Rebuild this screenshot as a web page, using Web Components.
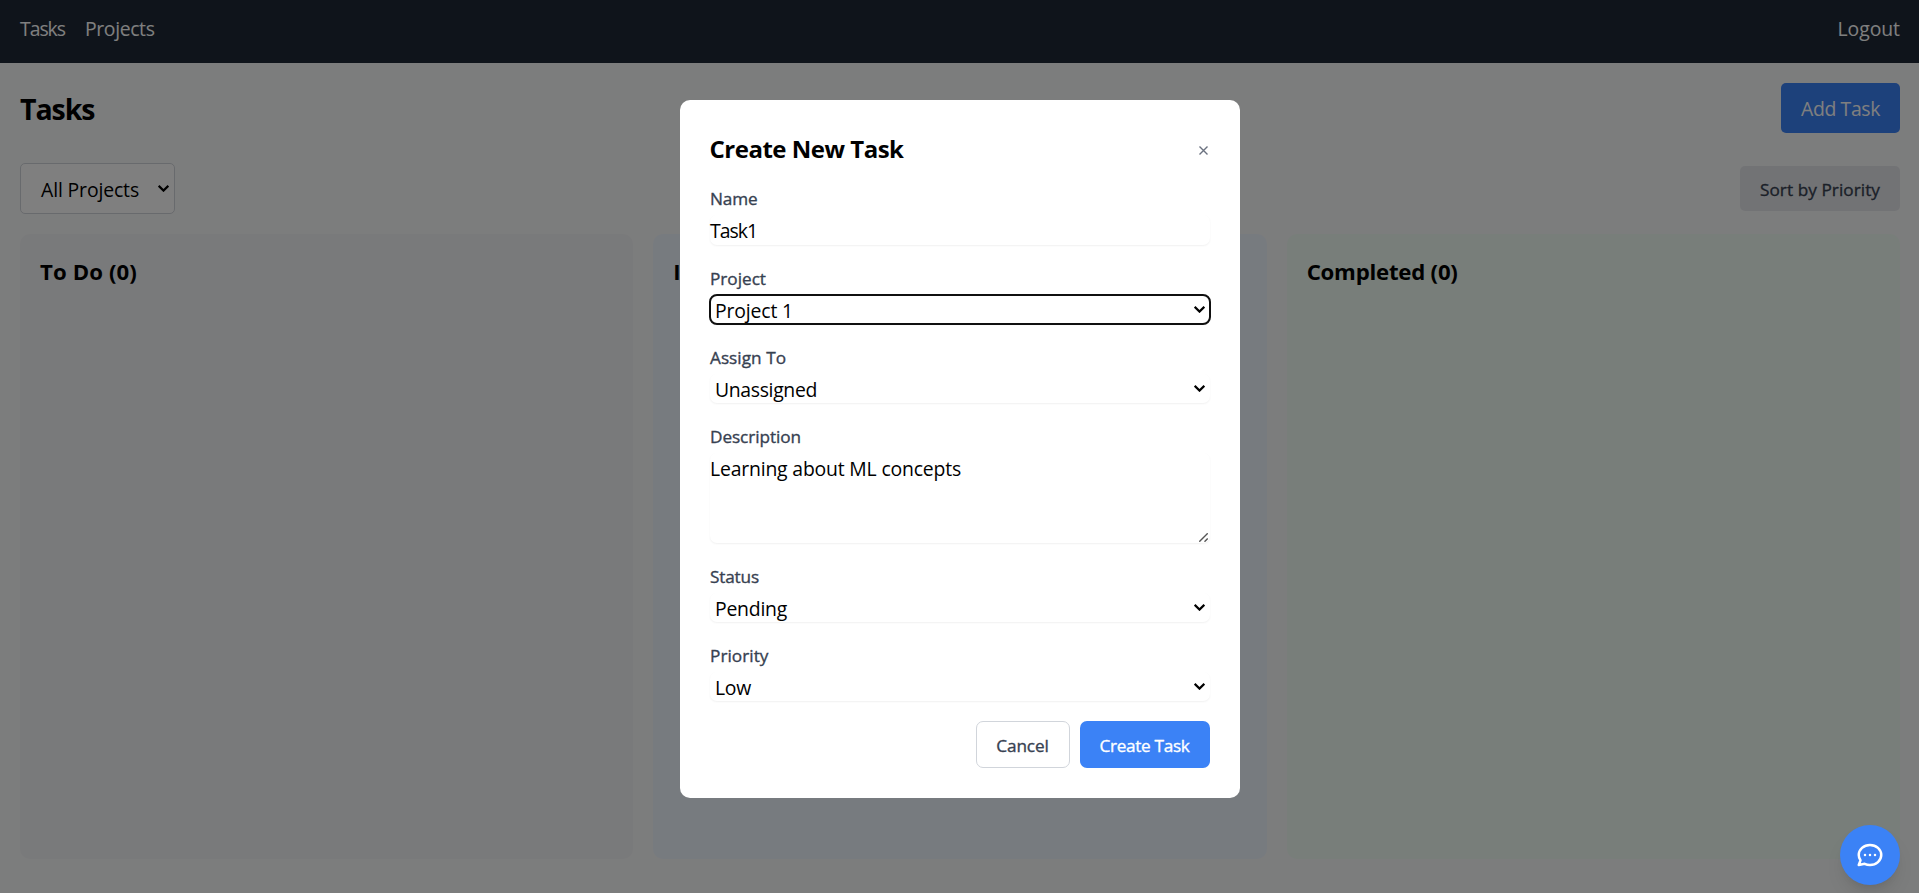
<!DOCTYPE html>
<html lang="en"><head><meta charset="utf-8"><title>Tasks</title>
<style>
html,body{margin:0;height:100%;overflow:hidden}
body{font:19.4px/30px "Open Sans","Noto Sans",sans-serif;color:#000}
</style></head><body>
<task-app></task-app>
<script>
const define=(name,html,init)=>customElements.define(name,class extends HTMLElement{
  connectedCallback(){
    if(this.shadowRoot)return;
    const t=document.createElement('template');
    t.innerHTML=typeof html==='function'?html(this):html;
    this.attachShadow({mode:'open'}).append(t.content.cloneNode(true));
    if(init)init(this);
  }
});

/* A one-line label whose letter spacing is tuned to a given width. */
define('fit-text','<style>:host{display:inline-block;white-space:nowrap}span{display:inline-block}</style><span><slot></slot></span>',el=>{
  const w=+el.getAttribute('w'),s=el.shadowRoot.querySelector('span');
  const n=el.textContent.length,now=s.getBoundingClientRect().width;
  if(now&&w)s.style.letterSpacing=((w-now)/n)+'px';
  el.style.width=w+'px';
});

define('chevron-icon','<style>:host{display:block;width:11px;height:7px}svg{display:block}</style><svg width="11" height="7" viewBox="0 0 11 7"><path d="M.7.9 5.5 5.6 10.3.9" fill="none" stroke="currentColor" stroke-width="2.2"/></svg>');

define('nav-bar',`<style>
:host{display:flex;justify-content:space-between;height:63px;padding:14px 19px 0 20px;box-sizing:border-box;background:#1f2937;color:#fff;line-height:30px}
nav{display:flex;gap:20px}</style>
<nav><fit-text w="45">Tasks</fit-text><fit-text w="69.5">Projects</fit-text></nav><fit-text w="62.5">Logout</fit-text>`);

define('page-head',`<style>
:host{display:flex;justify-content:space-between;align-items:center;height:50px}
h1{margin:2px 0 0;font-size:28.5px;line-height:40px;font-weight:700}
button{font:inherit;border:0;margin:0;padding:2px 20px 0;width:119px;height:50px;border-radius:5px;background:#3b82f6;color:#fff;display:flex;align-items:center}
</style><h1><fit-text w="74.5">Tasks</fit-text></h1><button><fit-text w="79">Add Task</fit-text></button>`);

define('filter-bar',`<style>
:host{display:flex;justify-content:space-between;align-items:center;height:51px;margin-top:30px}
.sel{display:flex;align-items:center;justify-content:space-between;box-sizing:border-box;width:155px;height:51px;border:1px solid #d1d5db;border-radius:5px;background:#fff;padding:3px 5px 0 20px}
chevron-icon{margin-top:-3px}
button{font:500 17.2px/25px "Open Sans","Noto Sans",sans-serif;-webkit-text-stroke:.35px;border:0;width:160px;height:45px;padding:2px 20px 0;border-radius:5px;background:#e5e7eb;color:#374151;display:flex;align-items:center}
</style><div class="sel"><fit-text w="98">All Projects</fit-text><chevron-icon></chevron-icon></div><button><fit-text w="120">Sort by Priority</fit-text></button>`);

define('task-column',`<style>
:host{display:block;box-sizing:border-box;height:625px;padding:20px;border-radius:10px;background:var(--bg)}
h2{margin:0;font-size:22.2px;line-height:35px;font-weight:700}
</style><h2><slot></slot></h2>`);

define('chat-button',`<style>
:host{position:absolute;right:19px;bottom:8px;width:60px;height:60px;border-radius:50%;background:#3b82f6;color:#fff;display:flex;align-items:center;justify-content:center;box-shadow:0 12px 19px -4px rgba(0,0,0,.1),0 5px 8px -5px rgba(0,0,0,.1)}
svg{display:block}
</style><svg width="30" height="30" viewBox="0 0 24 24" fill="none" stroke="currentColor" stroke-width="2" stroke-linecap="round" stroke-linejoin="round"><path d="M8 12h.01M12 12h.01M16 12h.01M21 12c0 4.418-4.03 8-9 8a9.863 9.863 0 01-4.255-.949L3 20l1.395-3.72C3.512 15.042 3 13.574 3 12c0-4.418 4.03-8 9-8s9 3.582 9 8z"/></svg>`);

define('form-field',el=>{
const select=el.hasAttribute('select'),area=el.hasAttribute('area');
const h=area?90:select?29:30;
return `<style>
:host{display:block;height:${h+30}px;margin-bottom:20px}
label{display:block;box-sizing:border-box;height:25px;padding:1px 0 0 .5px;font-size:17.2px;line-height:25px;font-weight:500;-webkit-text-stroke:.35px;color:#374151}
.box{position:relative;box-sizing:border-box;margin-top:5px;height:${h}px;border-radius:7px;background:#fff;box-shadow:0 1px 2px rgba(0,0,0,.06);display:flex;justify-content:space-between;padding:1px 5px 0 ${select?5.5:.5}px;line-height:30px}
.box.focus{outline:2px solid #101010;outline-offset:-1px}
chevron-icon{margin-top:10px}
.grip{position:absolute;right:2px;bottom:1px}
</style><label><fit-text w="${el.getAttribute('lw')}">${el.getAttribute('label')}</fit-text></label>
<div class="box ${el.hasAttribute('focused')?'focus':''}"><fit-text w="${el.getAttribute('vw')}">${el.getAttribute('value')}</fit-text>${select?'<chevron-icon></chevron-icon>':''}${area?'<svg class="grip" width="9" height="9" viewBox="0 0 9 9"><path d="M.3 8.7 8.7.3M5.5 8.7 8.7 5.5" stroke="#555" stroke-width="1.4"/></svg>':''}</div>`});

define('task-modal',`<style>
:host{display:block;box-sizing:border-box;width:560px;height:698px;padding:30px;border-radius:10px;background:#fff}
header{display:flex;justify-content:space-between;align-items:center;height:35px;margin:1px 0 19px}
h2{margin:0;font-size:24px;line-height:35px;font-weight:700}
.x{color:#6b7280;margin:4px 2px 0 0;display:block}
footer{display:flex;justify-content:flex-end;gap:10px}
button{font:500 17.2px/25px "Open Sans","Noto Sans",sans-serif;-webkit-text-stroke:.35px;height:47px;padding:2px 0 0;box-sizing:border-box;border-radius:7px;display:flex;align-items:center;justify-content:center}
.c{width:94px;border:1px solid #d1d5db;background:#fff;color:#374151}
.p{width:130px;border:0;background:#3b82f6;color:#fff}
</style><header><h2><fit-text w="194">Create New Task</fit-text></h2><svg class="x" width="9" height="9" viewBox="0 0 9 9"><path d="M.5.5 8.5 8.5M8.5.5.5 8.5" stroke="currentColor" stroke-width="1.4"/></svg></header>
<form-field label="Name" lw="47.5" value="Task1" vw="47"></form-field>
<form-field label="Project" lw="56" value="Project 1" vw="78" select focused></form-field>
<form-field label="Assign To" lw="76" value="Unassigned" vw="102" select></form-field>
<form-field label="Description" lw="91" value="Learning about ML concepts" vw="251" area></form-field>
<form-field label="Status" lw="49" value="Pending" vw="72" select></form-field>
<form-field label="Priority" lw="58.5" value="Low" vw="36" select></form-field>
<footer><button class="c"><fit-text w="52.5">Cancel</fit-text></button><button class="p"><fit-text w="90">Create Task</fit-text></button></footer>`);

define('task-app',`<style>
:host{display:block;height:893px;position:relative;background:#f9fafb;overflow:hidden}
main{padding:20px 19px 0 20px}
.board{display:grid;grid-template-columns:repeat(3,1fr);gap:20px;margin-top:20px}
.shade{position:absolute;inset:0;background:rgba(0,0,0,.5);display:flex;align-items:flex-start;justify-content:center;padding-top:100px}
</style><nav-bar></nav-bar><main><page-head></page-head><filter-bar></filter-bar>
<div class="board"><task-column style="--bg:#f3f4f6"><fit-text w="97">To Do (0)</fit-text></task-column><task-column style="--bg:#eff6ff"><fit-text w="143">In Progress (0)</fit-text></task-column><task-column style="--bg:#f0fdf4"><fit-text w="151">Completed (0)</fit-text></task-column></div></main>
<div class="shade"><task-modal></task-modal></div><chat-button></chat-button>`);
</script></body></html>
